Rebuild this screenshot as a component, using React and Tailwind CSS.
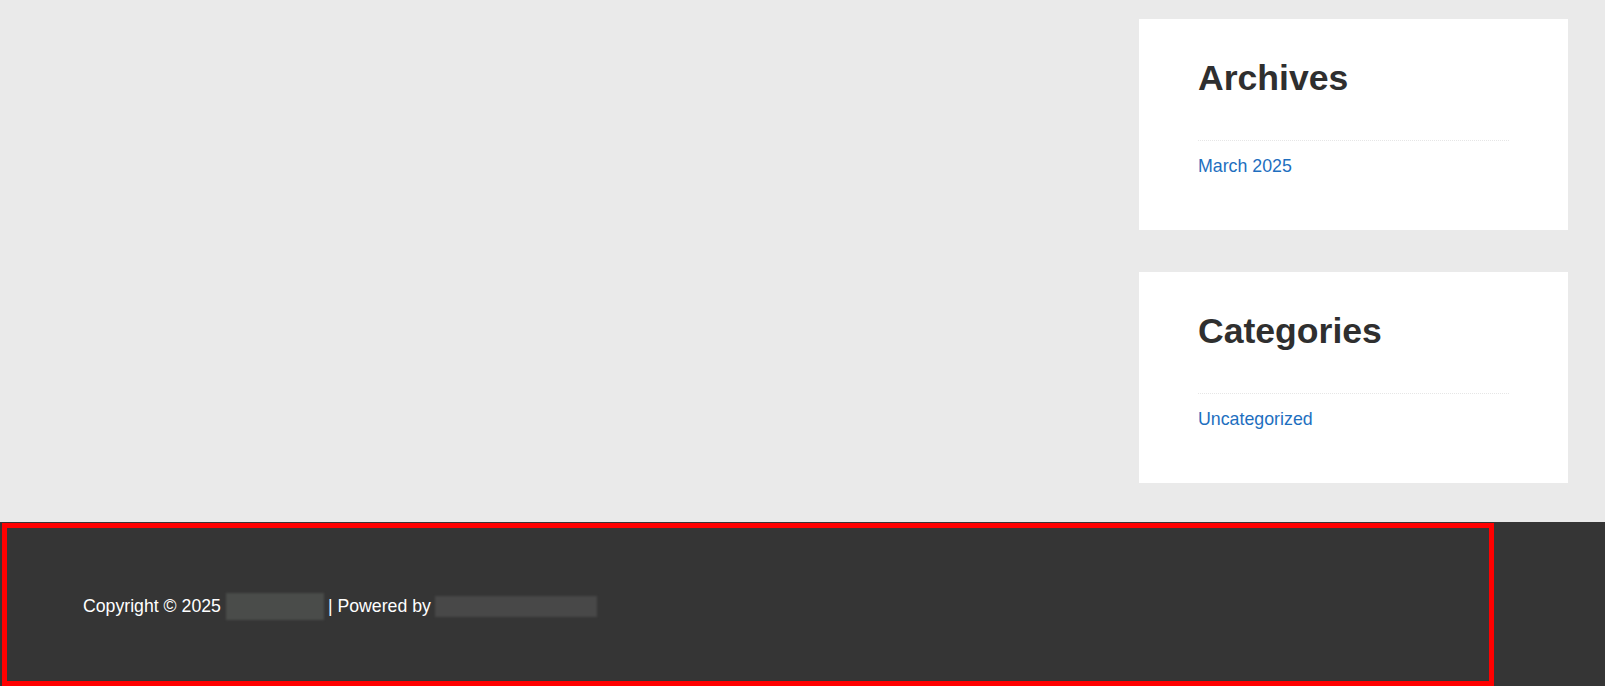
import React from 'react';

const widgets = [
    { title: 'Archives', link: 'March 2025' },
    { title: 'Categories', link: 'Uncategorized' },
];

const Widget = ({ title, link }) => (
    <section className="bg-white pt-[38px] pb-[50px] px-[59px]">
        <h2 className="text-[35.6px] leading-[43px] font-bold text-[#2f2f2f] mb-[40px]">{title}</h2>
        <ul className="border-t border-dotted border-[#e6e6e6] pt-[12px]">
            <li>
                <a href="#" className="text-[17.8px] leading-[27px] text-[#1e6fbf]">{link}</a>
            </li>
        </ul>
    </section>
);

export default function App() {
    return (
        <div className="bg-[#eaeaea] font-['Liberation_Sans',Arial,sans-serif] min-h-[686px] flex flex-col">
            <div className="flex justify-end pt-[19px] pr-[37px] pb-[39px]">
                <aside className="w-[429px] flex flex-col gap-[42px]">
                    {widgets.map((w) => (
                        <Widget key={w.title} {...w} />
                    ))}
                </aside>
            </div>

            {/* Footer */}
            <footer className="relative bg-[#353535] h-[164px] flex items-center pl-[83px] pt-[5px]">
                <p className="text-white text-[17.7px] leading-[27px] flex items-center">
                    <span>Copyright © 2025</span>
                    <span className="inline-block w-[98px] h-[27px] ml-[5px] mr-[4px] bg-[#4a4c4a] blur-[1px]" />
                    <span>| Powered by</span>
                    <span className="inline-block w-[162px] h-[21px] ml-[4px] bg-[#484848] blur-[1px]" />
                </p>
                <div className="absolute left-[2px] top-[1px] w-[1492px] h-[163px] border-[5px] border-[#ff0000] pointer-events-none" />
            </footer>
        </div>
    );
}
